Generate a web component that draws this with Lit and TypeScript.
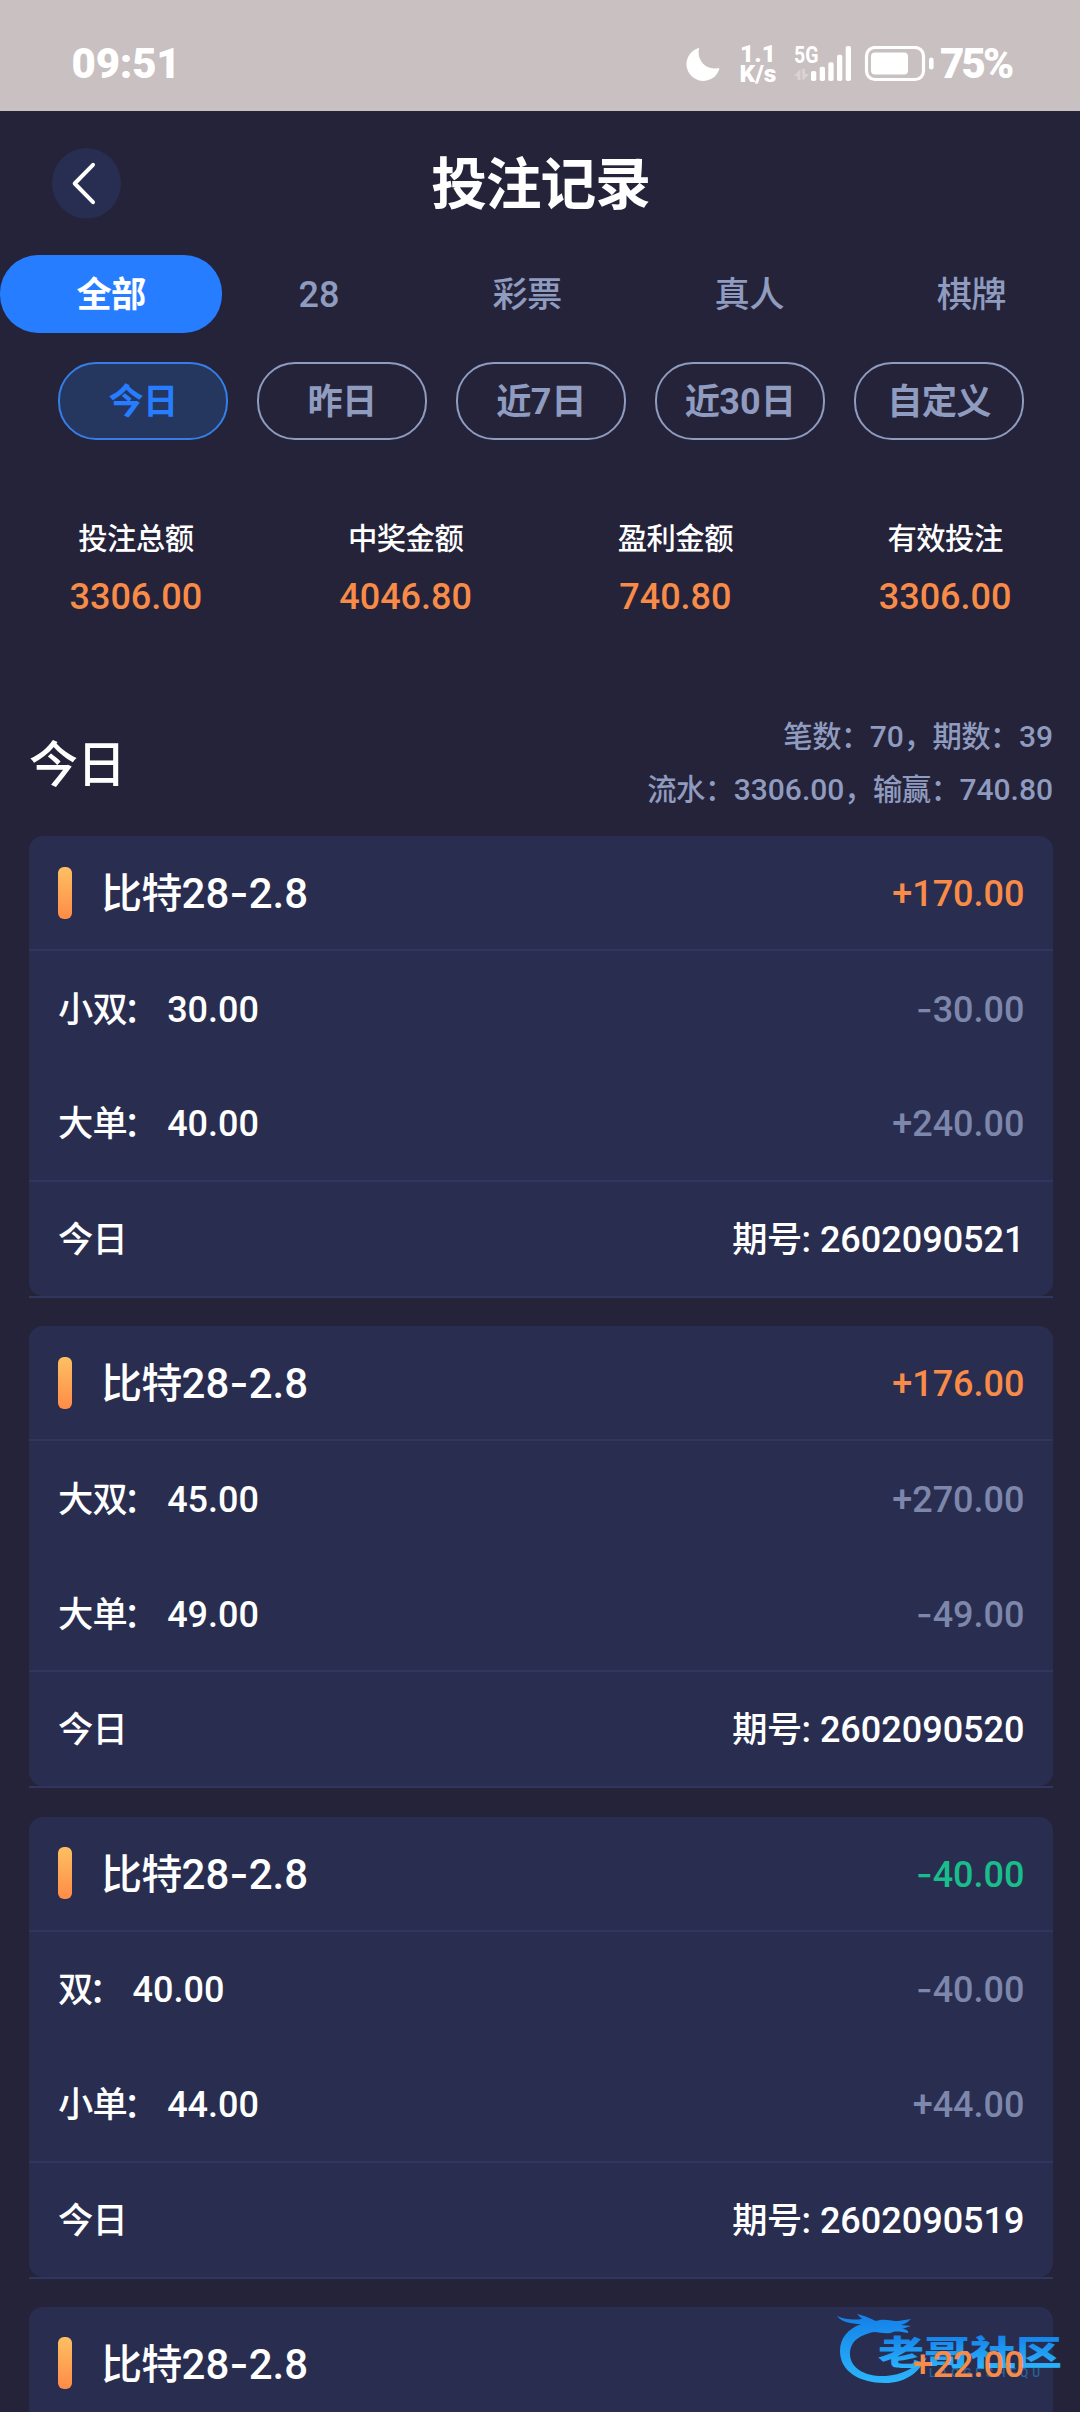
import { LitElement, html, css, svg, nothing } from "lit";
import { customElement, property } from "lit/decorators.js";
import { classMap } from "lit/directives/class-map.js";

/* Shared run styles: CJK runs and numeric runs use different faces and scales. */
const typeStyles = css`
  :host {
    font-family: "Noto Sans CJK SC", sans-serif;
  }
  .c,
  .n,
  .h {
    line-height: 0;
  }
  .c {
    font-size: 1.02em;
    letter-spacing: -0.02em;
  }
  .n {
    font-family: Roboto, "Liberation Sans", sans-serif;
    font-size: 1.042em;
    white-space: pre;
  }
  .h {
    font-family: Inter, "Liberation Sans", sans-serif;
    font-size: 1.042em;
  }
`;

/* Splits a string into CJK, hyphen and latin runs. */
const runs = (s: string) =>
  (s.match(/[\u3000-\uffef]+|-|[^\u3000-\uffef-]+/g) ?? []).map((r) =>
    r === "-"
      ? html`<span class="h">-</span>`
      : /[\u3000-\uffef]/.test(r)
        ? html`<span class="c">${r}</span>`
        : html`<span class="n">${r}</span>`,
  );

interface Bet {
  name: string;
  stake: string;
  result: string;
}
interface Ticket {
  total: string;
  bets: Bet[];
  issue?: string;
}

@customElement("status-bar")
class StatusBar extends LitElement {
  static styles = css`
    :host {
      display: flex;
      align-items: center;
      box-sizing: border-box;
      height: 111px;
      padding: 16px 66px 0 71.500px;
      background: #c9c0c1;
      color: #fff;
      font-family: Roboto, "Liberation Sans", sans-serif;
      font-weight: 900;
      line-height: 1;
    }
    .time {
      flex: 1;
      font-size: 42px;
      letter-spacing: -0.2px;
    }
    .moon,
    .signal,
    .battery {
      display: block;
      flex: none;
    }
    .rate {
      width: 40px;
      margin: 0 16px 0 18px;
      font-size: 24.500px;
      line-height: 20px;
      text-align: center;
      white-space: nowrap;
    }
    .pct {
      width: 74px;
      margin-left: 4px;
      font-size: 42px;
      letter-spacing: -2.800px;
      white-space: nowrap;
    }
    .gen {
      font: 700 23px Roboto, sans-serif;
    }
  `;
  render() {
    return html`
      <div class="time">09:51</div>
      <svg class="moon" width="34" height="34" viewBox="0 0 34 34" fill="#fff">
        <path d="M12 1.2Q13.4 .2 13 2C10.5 13 20 23.5 31.500 21.200Q34 20.600 33 23A16.800 16.800 0 1 1 12 1.200Z" />
      </svg>
      <div class="rate">1.1<br />K/s</div>
      <svg class="signal" width="58" height="50" viewBox="0 -6 58 50" fill="#fff">
        <text class="gen" x="0" y="18" textLength="24.500" lengthAdjust="spacingAndGlyphs">5G</text>
        <g opacity=".3">
          <path d="M0 31 6.500 24V35H3.500V31ZM8 24H11V29H15L8.500 36Z" />
        </g>
        ${[
          [17, 26, 10],
          [25.7, 21.7, 14.3],
          [34.3, 17.3, 18.7],
          [43, 9.7, 26.3],
          [51.7, 1, 35],
        ].map(([x, y, h]) => svg`<rect x=${x} y=${y} width="5.300" height=${h} rx="1.800" />`)}
      </svg>
      <svg class="battery" width="84" height="36" viewBox="0 0 84 36">
        <rect x="14.500" y="1.500" width="57" height="32" rx="8.500" fill="none" stroke="#fff" stroke-width="3.200" />
        <rect x="19" y="6.500" width="37" height="22" rx="4" fill="#fff" />
        <rect x="77" y="11.500" width="4.600" height="12" rx="2.300" fill="#fff" />
      </svg>
      <div class="pct">75%</div>
    `;
  }
}

@customElement("bet-card")
class BetCard extends LitElement {
  @property({ attribute: false }) ticket!: Ticket;
  static styles = [
    typeStyles,
    css`
      :host {
        display: block;
        font-size: 34.560px;
        font-weight: 500;
        line-height: 50px;
        color: #fff;
      }
      .n,
      .h {
        font-weight: 480;
      }
      .box {
        background: #292e50;
        border-radius: 14px;
      }
      .row {
        display: flex;
        align-items: center;
        justify-content: space-between;
        box-sizing: border-box;
        height: 114.500px;
        padding: 0 28.500px 3px 29px;
      }
      .head {
        height: 115px;
        border-bottom: 2px solid #30365d;
      }
      .foot {
        height: 116px;
        padding-bottom: 4px;
        border-top: 2px solid #30365d;
      }
      .edge {
        height: 2px;
        background: #30365d;
      }
      .name {
        display: flex;
        align-items: center;
        gap: 29px;
        font-size: 40.320px;
      }
      .bar {
        width: 14px;
        height: 52px;
        margin-top: 3px;
        border-radius: 6px;
        background: linear-gradient(#fec062, #ff8b47);
      }
      .up {
        color: #f98b48;
      }
      .down {
        color: #19bd8c;
      }
      .bet {
        display: flex;
      }
      .colon {
        margin: 0 9px 0 -3.500px;
      }
      .result {
        color: #7d86ab;
      }
      .num {
        position: relative;
        z-index: 2;
      }
    `,
  ];
  render() {
    const t = this.ticket;
    const down = t.total.startsWith("-");
    return html`
      <div class="box">
        <div class="row head">
          <div class="name"><span class="bar"></span><span>${runs("比特28-2.8")}</span></div>
          <span class=${classMap({ num: true, up: !down, down })}>${runs(t.total)}</span>
        </div>
        ${t.bets.map(
          (b) => html`<div class="row">
            <div class="bet"><span>${runs(b.name)}</span><span class="colon">：</span><span>${runs(b.stake)}</span></div>
            <span class="result">${runs(b.result)}</span>
          </div>`,
        )}
        ${t.issue
          ? html`<div class="row foot"><span>${runs("今日")}</span><span>${runs("期号: " + t.issue)}</span></div>`
          : nothing}
      </div>
      <div class="edge"></div>
    `;
  }
}

@customElement("app-root")
class AppRoot extends LitElement {
  static styles = [
    typeStyles,
    css`
      :host {
        display: block;
        position: relative;
        width: 1080px;
        height: 2412px;
        overflow: hidden;
        background: #24233a;
        color: #fff;
        font-size: 34.560px;
        line-height: 50px;
      }
      .bar {
        display: grid;
        grid-template-columns: 69px 1fr 69px;
        align-items: center;
        height: 144px;
        padding: 0 52px;
      }
      .back {
        display: block;
      }
      .title {
        padding: 0 0 5px 1px;
        text-align: center;
        font-size: 54.700px;
        font-weight: 700;
        line-height: 80px;
      }
      .tabs {
        display: flex;
        justify-content: space-between;
      }
      .tab {
        height: 78px;
        padding: 0 76.500px;
        border-radius: 38px;
        line-height: 74px;
        color: #8f9bbf;
        font-weight: 480;
        white-space: nowrap;
      }
      .tab.on {
        background: #277dff;
        color: #fff;
        font-weight: 700;
      }
      .days {
        display: grid;
        grid-template-columns: repeat(5, 1fr);
        gap: 29px;
        padding: 29px 56px 0 58px;
      }
      .day {
        box-sizing: border-box;
        height: 78px;
        border: 2px solid #8f9bbf;
        border-radius: 38px;
        line-height: 71px;
        text-align: center;
        font-weight: 700;
        color: #8f9bbf;
        white-space: nowrap;
      }
      .day.on {
        border-color: #347ee6;
        background: #25365f;
        color: #277dff;
      }
      .sums {
        display: grid;
        grid-template-columns: repeat(4, 1fr);
        padding: 72px 0 0 1px;
        text-align: center;
      }
      .label {
        font-size: 28.800px;
        font-weight: 500;
      }
      .sum {
        margin-top: 7px;
        color: #f98b48;
      }
      .sum .n {
        font-weight: 480;
      }
      .group {
        display: flex;
        justify-content: space-between;
        align-items: center;
        padding: 90px 27px 0 29px;
      }
      .when {
        padding-bottom: 2px;
        font-size: 48px;
        font-weight: 500;
      }
      .stats {
        font-size: 28.800px;
        line-height: 52.500px;
        text-align: right;
        color: #8f9bbf;
        font-weight: 480;
      }
      .list {
        display: flex;
        flex-direction: column;
        gap: 28.330px;
        padding: 22px 27px 0 29px;
      }
      .mark {
        position: absolute;
        left: 832px;
        top: 2304px;
        z-index: 1;
      }
      .brand {
        font: 900 34px "Noto Sans CJK SC", sans-serif;
      }
      .latin {
        font: 500 12px Roboto, sans-serif;
      }
    `,
  ];

  private tickets: Ticket[] = [
    {
      total: "+170.00",
      bets: [
        { name: "小双", stake: "30.00", result: "-30.00" },
        { name: "大单", stake: "40.00", result: "+240.00" },
      ],
      issue: "2602090521",
    },
    {
      total: "+176.00",
      bets: [
        { name: "大双", stake: "45.00", result: "+270.00" },
        { name: "大单", stake: "49.00", result: "-49.00" },
      ],
      issue: "2602090520",
    },
    {
      total: "-40.00",
      bets: [
        { name: "双", stake: "40.00", result: "-40.00" },
        { name: "小单", stake: "44.00", result: "+44.00" },
      ],
      issue: "2602090519",
    },
    { total: "+22.00", bets: [] },
  ];

  render() {
    return html`
      <status-bar></status-bar>
      <header class="bar">
        <svg class="back" width="69" height="72" viewBox="0 -1 69 72">
          <ellipse cx="34.500" cy="35.300" rx="34.500" ry="35.300" fill="#282e52" />
          <path d="M41 16.800 22.700 35.500 41 54.200" fill="none" stroke="#fff" stroke-width="4" stroke-linecap="round" stroke-linejoin="round" />
        </svg>
        <div class="title">${runs("投注记录")}</div>
      </header>
      <nav class="tabs">
        ${["全部", "28", "彩票", "真人", "棋牌"].map(
          (t, i) => html`<div class=${classMap({ tab: true, on: i === 0 })}>${runs(t)}</div>`,
        )}
      </nav>
      <nav class="days">
        ${["今日", "昨日", "近7日", "近30日", "自定义"].map(
          (t, i) => html`<div class=${classMap({ day: true, on: i === 0 })}>${runs(t)}</div>`,
        )}
      </nav>
      <section class="sums">
        ${[
          ["投注总额", "3306.00"],
          ["中奖金额", "4046.80"],
          ["盈利金额", "740.80"],
          ["有效投注", "3306.00"],
        ].map(
          ([l, v]) => html`<div>
            <div class="label">${runs(l)}</div>
            <div class="sum">${runs(v)}</div>
          </div>`,
        )}
      </section>
      <section class="group">
        <div class="when">${runs("今日")}</div>
        <div class="stats">
          <div>${runs("笔数：70，期数：39")}</div>
          <div>${runs("流水：3306.00，输赢：740.80")}</div>
        </div>
      </section>
      <section class="list">${this.tickets.map((t) => html`<bet-card .ticket=${t}></bet-card>`)}</section>
      <svg class="mark" width="240" height="90" viewBox="0 0 240 90">
        <defs>
          <linearGradient id="blue" gradientUnits="userSpaceOnUse" x1="0" y1="14" x2="0" y2="78">
            <stop offset="0" stop-color="#1583ea" />
            <stop offset="1" stop-color="#2bb4fb" />
          </linearGradient>
          <linearGradient id="ink" gradientUnits="userSpaceOnUse" x1="0" y1="32" x2="0" y2="64">
            <stop offset="0" stop-color="#1583ea" />
            <stop offset="1" stop-color="#2bb4fb" />
          </linearGradient>
        </defs>
        <path
          fill="url(#blue)"
          d="M5 12C14 16 22 16 30 15L25 10C34 12 39 15 44 17C52 14 60 17 66 17L79 15C75 19 72 20 69 21L79 22L70 25C74 25 77 27 76 29C70 28 65 27 61 28C55 31 48 28 42 28C28 31 18 37 18 50C18 64 33 73 54 72C69 71 83 64 95 53C87 69 73 79 53 79C27 79 8 67 8 47C8 34 16 25 29 20C20 20 9 18 5 12Z"
        />
        <text class="brand" fill="url(#ink)" x="46" y="60.500" textLength="184" lengthAdjust="spacingAndGlyphs">老哥社区</text>
        <text class="latin" x="97" y="73" fill="#2779b8" opacity=".7" textLength="111">LAOGESHEQU</text>
      </svg>
    `;
  }
}
